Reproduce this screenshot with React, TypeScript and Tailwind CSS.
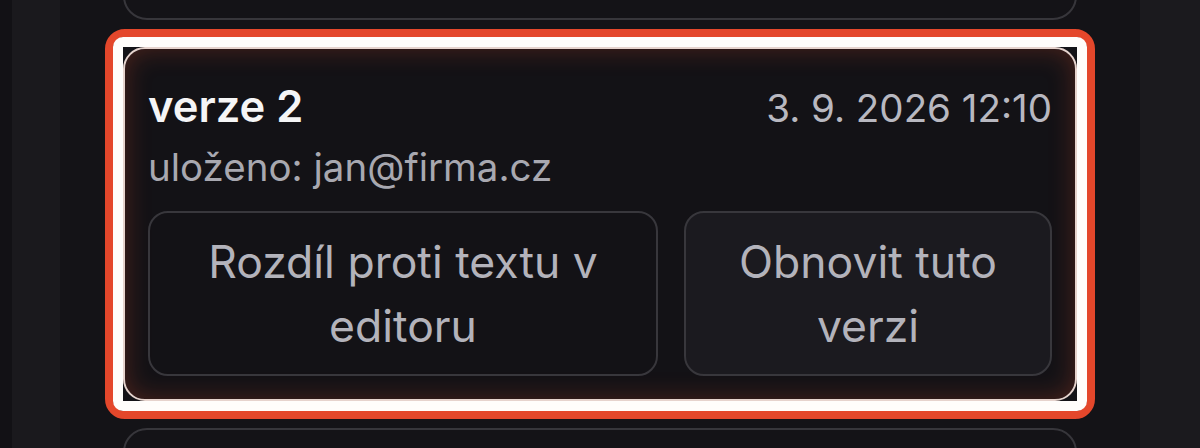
import React from "react";

export default function App() {
  return (
    <div
      className="flex h-[448px] w-[1200px] overflow-hidden bg-[#131216]"
      style={{ fontFamily: "Inter, 'Noto Sans', sans-serif" }}
    >
      <div className="w-[12px] shrink-0 bg-[#121115]" />
      <div className="w-[48px] shrink-0 bg-[#1a191d]" />
      <main className="flex w-[1080px] shrink-0 flex-col gap-[27px] bg-[#141317] px-[63px]">
        <div className="-mt-[80px] h-[100px] shrink-0 rounded-[24px] border-2 border-[#37363b]" />

        <div className="relative shrink-0">
          <div className="flex h-[354px] flex-col rounded-[22px] border-2 border-[#e6d3cd] bg-[#131216] px-[23px] pt-[31px] shadow-[inset_0_0_26px_rgba(200,70,40,0.32)]">
            <div className="flex items-baseline justify-between">
              <span className="text-[43.5px] font-semibold leading-[52px] text-[#f5f5f6]">verze 2</span>
              <span className="text-[38.5px] leading-[46px] text-[#b8b8c0]">3. 9. 2026 12:10</span>
            </div>
            <div className="mt-[12px] text-[38.5px] leading-[46px] text-[#a8a8b0]">uloženo: jan@firma.cz</div>
            <div className="mt-[21px] flex gap-[26px]">
              <button className="w-[510px] shrink-0 rounded-[20px] border-2 border-[#38373c] bg-transparent px-[30px] py-[16.5px] text-center text-[44.5px] leading-[64px] text-[#b3b3bb]">
                Rozdíl proti textu v editoru
              </button>
              <button className="flex-1 rounded-[20px] border-2 border-[#38373c] bg-[#1b1a1f] px-[30px] py-[16.5px] text-center text-[44.5px] leading-[64px] text-[#b3b3bb]">
                Obnovit tuto verzi
              </button>
            </div>
          </div>
          <div className="pointer-events-none absolute -inset-[18px] rounded-[20px] border-[8px] border-[#e4472b]">
            <div className="h-full w-full rounded-[10px] border-[10px] border-[#fffdfb]" />
          </div>
        </div>

        <div className="h-[100px] shrink-0 rounded-[24px] border-2 border-[#37363b]" />
      </main>
      <div className="flex-1 bg-[#1b1a1e]" />
    </div>
  );
}
